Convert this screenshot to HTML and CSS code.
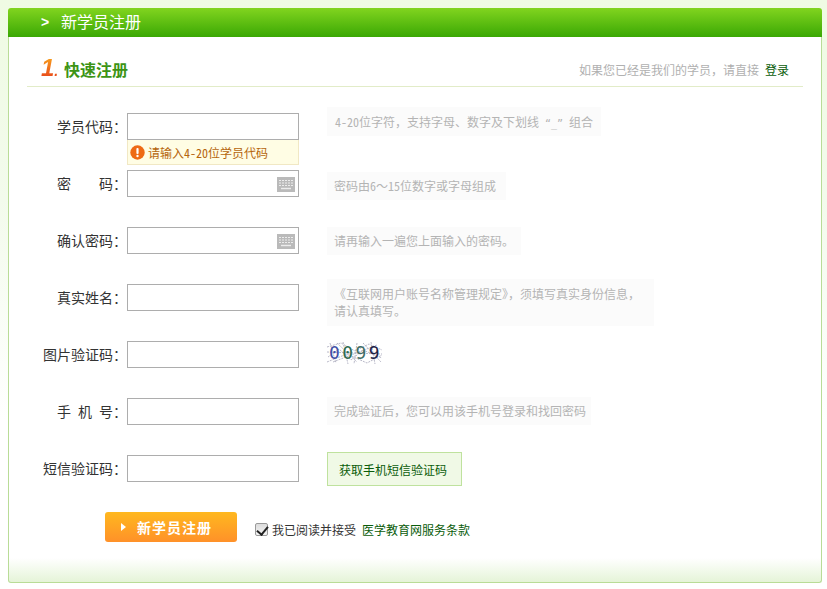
FILE: index.html
```html
<!DOCTYPE html>
<html lang="zh-CN">
<head>
<meta charset="utf-8">
<title>新学员注册</title>
<link rel="stylesheet" href="styles.css">
</head>
<body>
<main class="panel">
  <header class="panel-head"><span class="chev">&gt;</span><h1 class="panel-title">新学员注册</h1></header>
  <div class="panel-body">
    <div class="step">
      <div class="step-title"><span class="step-num">1<i class="step-dot">.</i></span><h2 class="step-name">快速注册</h2></div>
      <p class="step-note">如果您已经是我们的学员，请直接 <a class="link" href="#">登录</a></p>
    </div>
    <form class="form">
      <div class="row">
        <label class="label">学员代码：</label>
        <div class="field"><input class="input" type="text">
          <div class="tip"><svg class="tip-icon" viewBox="0 0 15 15" width="15" height="15"><circle cx="7.5" cy="7.5" r="7.2" fill="#ee6a14"/><rect x="6.4" y="3" width="2.2" height="6" rx="1" fill="#fff"/><circle cx="7.5" cy="11" r="1.2" fill="#fff"/></svg>请输入4-20位学员代码</div>
        </div>
        <div class="hint hint-a">4-20位字符，支持字母、数字及下划线 <span class="q">“_”</span> 组合</div>
      </div>
      <div class="row">
        <label class="label">密<span class="sp2"></span>码：</label>
        <div class="field"><input class="input" type="password">
          <svg class="kbd" viewBox="0 0 18 15" width="18" height="15"><rect width="18" height="15" fill="#bababa"/><path d="M2 3.5h14M2 6h14M2 8.500h14" stroke="#ececec" stroke-width="1" stroke-dasharray="2 1"/><path d="M4 11.500h10" stroke="#ececec" stroke-width="1.4"/></svg>
        </div>
        <div class="hint hint-b">密码由6～15位数字或字母组成</div>
      </div>
      <div class="row">
        <label class="label">确认密码：</label>
        <div class="field"><input class="input" type="password">
          <svg class="kbd" viewBox="0 0 18 15" width="18" height="15"><rect width="18" height="15" fill="#bababa"/><path d="M2 3.5h14M2 6h14M2 8.500h14" stroke="#ececec" stroke-width="1" stroke-dasharray="2 1"/><path d="M4 11.500h10" stroke="#ececec" stroke-width="1.4"/></svg>
        </div>
        <div class="hint hint-b hint-d">请再输入一遍您上面输入的密码。</div>
      </div>
      <div class="row">
        <label class="label">真实姓名：</label>
        <div class="field"><input class="input" type="text"></div>
        <div class="hint hint-c">《互联网用户账号名称管理规定》，须填写真实身份信息，<br>请认真填写。</div>
      </div>
      <div class="row">
        <label class="label">图片验证码：</label>
        <div class="field"><input class="input" type="text"></div>
        <div class="captcha">
          <svg class="captcha-noise" viewBox="0 0 55 22" width="55" height="22"><path d="M0 5L14 1L28 9L42 2L55 8M1 15L12 7L24 18L36 8L55 16M3 1L9 21M16 0L21 22M30 1L27 22M44 0L48 22M0 10L55 12M6 20L50 3M0 20L20 12L40 21L55 13M10 1L30 20M36 1L54 20" stroke="#b9b9c8" stroke-width="1" fill="none" stroke-dasharray="2 1"/></svg>
          <span class="cd cd1">0</span><span class="cd cd2">0</span><span class="cd cd3">9</span><span class="cd cd4">9</span>
        </div>
      </div>
      <div class="row">
        <label class="label">手<span class="sp1"></span>机<span class="sp1"></span>号：</label>
        <div class="field"><input class="input" type="text"></div>
        <div class="hint hint-b hint-e">完成验证后，您可以用该手机号登录和找回密码</div>
      </div>
      <div class="row">
        <label class="label">短信验证码：</label>
        <div class="field"><input class="input" type="text"></div>
        <button class="sms" type="button">获取手机短信验证码</button>
      </div>
      <div class="submit-row">
        <button class="submit" type="button"><span class="tri"></span>新学员注册</button>
        <label class="agree"><input class="check" type="checkbox" checked>我已阅读并接受</label>
        <a class="link terms" href="#">医学教育网服务条款</a>
      </div>
    </form>
  </div>
</main>
</body>
</html>
```
FILE: styles.css
```css
* { box-sizing: border-box; }
html, body { height: 100%; }
body {
  margin: 0;
  padding: 8px 5px 6px 8px;
  overflow: hidden;
  background: linear-gradient(#effbe3 0, #f3fbec 200px, #ffffff 420px);
  font-family: "Noto Sans Mono CJK SC", "Noto Sans CJK SC", sans-serif;
  font-size: 12px;
  color: #333;
}
.panel {
  width: 814px;
  height: 575px;
  display: flex;
  flex-direction: column;
  border-radius: 3px;
}
.panel-head {
  height: 29px;
  flex: none;
  display: flex;
  align-items: center;
  padding: 0 0 2px 33px;
  background: linear-gradient(#82d41f, #3aa804);
  border-radius: 3px 3px 0 0;
  color: #fff;
}
.chev { font: bold 14px "Liberation Sans", sans-serif; width: 20px; }
.panel-title { margin: 0; font-size: 16px; font-weight: 400; line-height: 27px; }
.panel-body {
  flex: 1;
  border: 1px solid #b9dc97;
  border-top: 0;
  border-radius: 0 0 3px 3px;
  padding: 0 18px;
  background: linear-gradient(to top, #e5f4d8 0, #ffffff 24px) #fff;
}
.step {
  height: 50px;
  border-bottom: 1px solid #e2ecc8;
  display: flex;
  justify-content: space-between;
  align-items: flex-end;
  padding: 0 14px 7px 14px;
}
.step-title { display: flex; align-items: flex-end; margin-bottom: -1px; }
.step-num {
  width: 23px;
  margin-bottom: -3px;
  font: italic bold 24px/24px "Liberation Sans", sans-serif;
  background: linear-gradient(#f9a61c, #e4301a);
  -webkit-background-clip: text;
  background-clip: text;
  color: transparent;
}
.step-dot { font-size: 14px; }
.step-name { margin: 0; font-size: 16px; font-weight: 700; color: #3c9415; line-height: 22px; }
.step-note { margin: 0; color: #b0b0b0; line-height: 18px; }
.link { color: #0a5c0a; text-decoration: none; }
.form { padding-top: 26px; }
.row { display: flex; height: 57px; align-items: flex-start; }
.label {
  width: 100px;
  height: 27px;
  line-height: 27px;
  font-size: 14px;
  color: #333;
  text-align: right;
  white-space: nowrap;
  flex: none;
}
.sp1 { display: inline-block; width: 7px; }
.sp2 { display: inline-block; width: 28px; }
.field { position: relative; width: 172px; flex: none; margin-right: 28px; }
.input {
  display: block;
  width: 172px;
  height: 27px;
  border: 1px solid #adadad;
  background: #fff;
  padding: 0 4px;
  margin: 0;
  outline: 0;
}
.tip {
  position: absolute;
  left: 0;
  top: 27px;
  width: 172px;
  height: 25px;
  display: flex;
  align-items: center;
  gap: 3px;
  padding-left: 2px;
  background: #fffde4;
  border: 1px solid #f1e8c4;
  border-top: 0;
  color: #b5650c;
  font-size: 12px;
  white-space: nowrap;
}
.tip-icon { flex: none; }
.kbd { position: absolute; right: 4px; top: 7px; }
.hint {
  background: #fbfbfb;
  color: #b4b4b4;
  white-space: nowrap;
}
.q { font: 10px "DejaVu Sans Mono", monospace; }
.hint-a { height: 29px; line-height: 29px; margin-top: -6px; padding: 0 8px; }
.hint-b { height: 28px; line-height: 27px; margin-top: 2px; padding: 0 10px 0 7px; }
.hint-d { margin-top: 0; padding-right: 7px; }
.hint-e { margin-top: -1px; padding-right: 5px; }
.hint-c { padding: 6px 14px 0 7px; line-height: 17px; margin-top: -5px; height: 47px; }
.captcha {
  position: relative;
  width: 55px;
  height: 22px;
  margin-top: 1px;
  display: flex;
  align-items: center;
  padding-left: 2px;
}
.captcha-noise { position: absolute; left: 0; top: 0; }
.cd { position: relative; width: 13.5px; font: 18px/22px "DejaVu Sans Mono", monospace; }
.cd1 { color: #3f4fa6; }
.cd2 { color: #2f6b4f; }
.cd3 { color: #416d66; }
.cd4 { color: #1d2347; }
.sms {
  height: 34px;
  width: 135px;
  margin: -3px 0 0 0;
  padding: 0 3px 0 0;
  background: #f0f9e6;
  border: 1px solid #bfe29e;
  color: #0a5c0a;
  font: 12px "Noto Sans Mono CJK SC", "Noto Sans CJK SC", sans-serif;
}
.submit-row { display: flex; align-items: center; height: 30px; padding-left: 78px; }
.submit {
  width: 132px;
  height: 30px;
  padding: 0 0 0 32px;
  border: 0;
  border-radius: 3px;
  background: linear-gradient(#ffb81f, #ff9129);
  color: #fff;
  font: 700 14px/30px "Noto Sans Mono CJK SC", "Noto Sans CJK SC", sans-serif;
  letter-spacing: 1px;
  text-align: left;
  position: relative;
  margin-right: 18px;
}
.tri {
  position: absolute;
  left: 16px;
  top: 11px;
  border-left: 5px solid #fff;
  border-top: 4px solid transparent;
  border-bottom: 4px solid transparent;
}
.agree { display: flex; align-items: center; color: #333; margin-top: 5px; }
.check {
  appearance: none;
  -webkit-appearance: none;
  position: relative;
  width: 13px;
  height: 13px;
  margin: 0 4px 0 0;
  border: 1px solid #9a9a9a;
  border-radius: 2px;
  background: linear-gradient(#dcdcdc, #f4f4f4);
}
.check:checked::after {
  content: "";
  position: absolute;
  left: 3px;
  top: 0;
  width: 5px;
  height: 9px;
  border: solid #222;
  border-width: 0 2px 2px 0;
  transform: rotate(40deg);
}
.terms { margin: 5px 0 0 6px; }
```
